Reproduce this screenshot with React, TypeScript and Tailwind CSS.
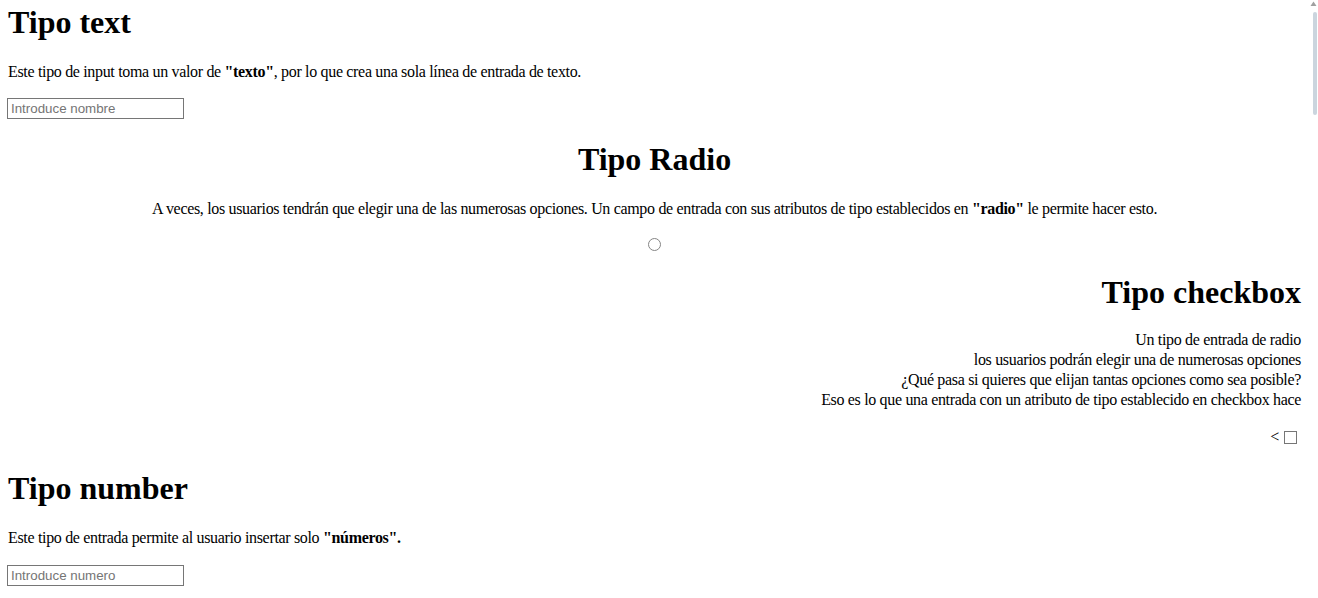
const textInput =
  "block w-[177px] h-[21px] -ml-px border border-solid border-[#767676] bg-white px-[3px] font-['Liberation_Sans',Arial,sans-serif] text-[13.33px] text-black placeholder:text-[#757575] outline-none";

function Heading({ children, className = '' }: { children: React.ReactNode; className?: string }) {
  return <h1 className={`text-[32px] font-bold leading-[37px] ${className}`}>{children}</h1>;
}

// thin overlay scrollbar seen at the right edge of the window
function ScrollIndicator() {
  return (
    <div aria-hidden className="pointer-events-none fixed right-0 top-0 flex h-full w-[9px] flex-col items-center">
      <svg width="7" height="6" viewBox="0 0 7 6" className="mt-[1px]">
        <path d="M3.5 0.5 L6.5 5 L0.5 5 Z" fill="#a0a0a0" />
      </svg>
      <div className="ml-[2px] mt-[5px] h-[103px] w-[4px] rounded-full bg-[#cbd5de]" />
    </div>
  );
}

export default function App() {
  return (
    <div className="min-h-screen bg-white">
      <div className="pl-[8px] pr-[17px] pt-[4px] font-['Liberation_Serif','Times_New_Roman',serif] text-[16px] tracking-[-0.33px] text-black">
        {/* Tipo text */}
        <section>
          <Heading className="tracking-normal">Tipo text</Heading>
          <p className="mt-[22px] leading-[18px]">
            Este tipo de input toma un valor de <b>"texto"</b>, por lo que crea una sola línea de entrada de texto.
          </p>
          <input type="text" placeholder="Introduce nombre" className={`mt-[17px] tracking-normal ${textInput}`} />
        </section>

        {/* Tipo Radio */}
        <section className="text-center">
          <Heading className="mt-[22px] tracking-normal">Tipo Radio</Heading>
          <p className="mt-[22px] leading-[18px]">
            A veces, los usuarios tendrán que elegir una de las numerosas opciones. Un campo de entrada con sus atributos
            de tipo establecidos en <b>"radio"</b> le permite hacer esto.
          </p>
          <input
            type="radio"
            name="opcion"
            className="mx-auto mt-[20px] block h-[13px] w-[13px] appearance-none rounded-full border-[1.5px] border-solid border-[#858585] bg-white checked:border-[4px] checked:border-[#0075ff]"
          />
        </section>

        {/* Tipo checkbox */}
        <section className="text-right">
          <Heading className="mt-[23px] tracking-normal">Tipo checkbox</Heading>
          <p className="mt-[19px] leading-[20px]">
            Un tipo de entrada de radio
            <br />
            los usuarios podrán elegir una de numerosas opciones
            <br />
            ¿Qué pasa si quieres que elijan tantas opciones como sea posible?
            <br />
            Eso es lo que una entrada con un atributo de tipo establecido en checkbox hace
          </p>
          <div className="mt-[18px] flex h-[18px] items-center justify-end gap-[5px] leading-[18px]">
            <span>&lt;</span>
            <input
              type="checkbox"
              className="mr-[4px] h-[13px] w-[13px] appearance-none border border-solid border-[#767676] bg-white checked:bg-[#0075ff]"
            />
          </div>
        </section>

        {/* Tipo number */}
        <section>
          <Heading className="mt-[24px] tracking-normal">Tipo number</Heading>
          <p className="mt-[22px] leading-[18px]">
            Este tipo de entrada permite al usuario insertar solo <b>"números".</b>
          </p>
          <input type="number" placeholder="Introduce numero" className={`mt-[18px] tracking-normal ${textInput}`} />
        </section>
      </div>
      <ScrollIndicator />
    </div>
  );
}
